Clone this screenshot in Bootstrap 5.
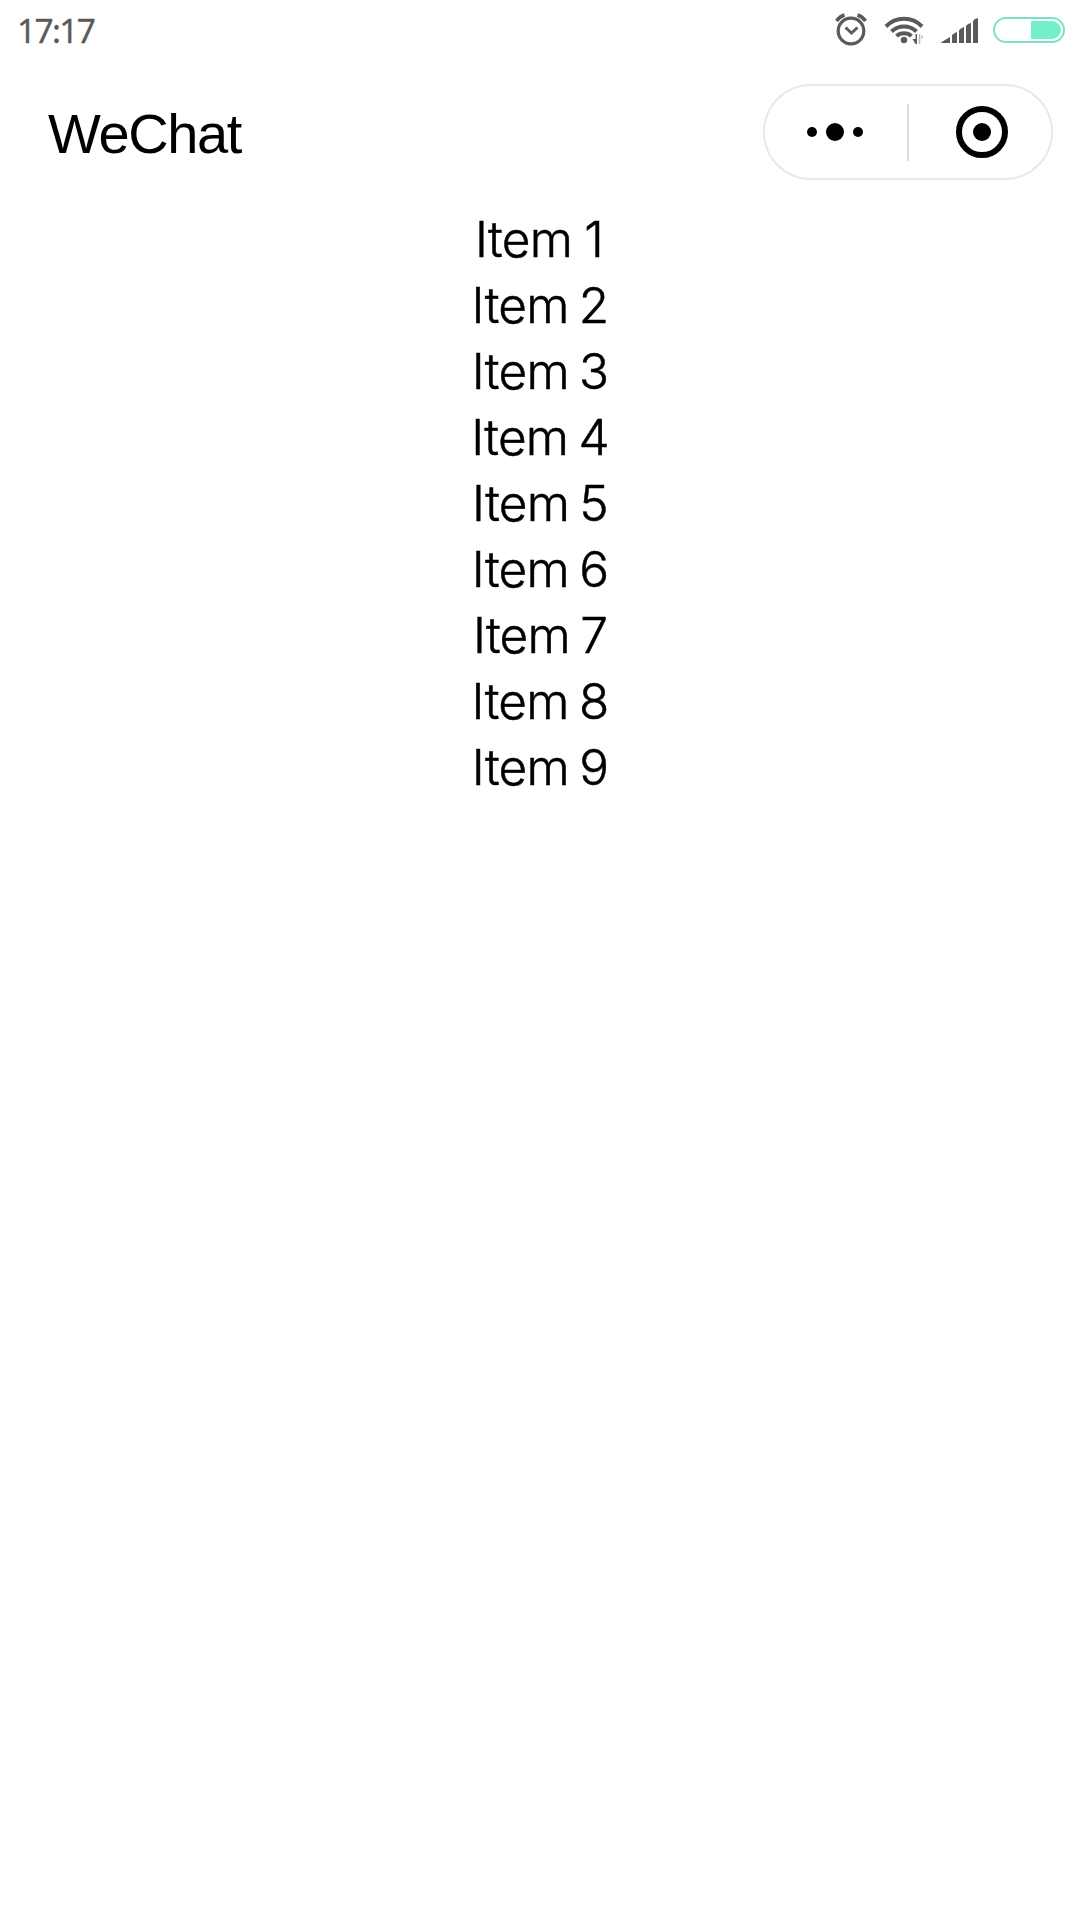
<!DOCTYPE html>
<html lang="en">
<head>
<meta charset="utf-8">
<meta name="viewport" content="width=device-width, initial-scale=1">
<title>WeChat</title>
<link rel="stylesheet" href="https://cdn.jsdelivr.net/npm/bootstrap@5.3.0/dist/css/bootstrap.min.css">
<style>
  body { background: #fff; color: #000; font-family: Inter, "Liberation Sans", sans-serif; }
  .status-bar { height: 60px; padding: 0 14px 0 17px; color: #5a5a5a; }
  .clock { font: 400 33.5px/60px "Noto Sans", sans-serif; letter-spacing: -1.7px; -webkit-text-stroke: .3px; }
  .title-bar { height: 144px; padding: 0 27px 0 48px; }
  .app-title { font: 400 56px/60px "Liberation Sans", sans-serif; letter-spacing: -1.4px; margin-top: 3px; }
  .capsule { width: 290px; height: 96px; border: 2px solid #e8e8e8; }
  .capsule-button { flex: 0 0 142px; height: 100%; border: 0; background: none; padding: 0; }
  .capsule-button svg { display: block; margin: 0 auto; }
  .capsule-more { padding-right: 2px; }
  .capsule-close { padding-left: 4px; }
  .capsule-divider { width: 2px; height: 57px; background: #dcdcdc; }
  .item-list { padding-top: 2px; font-size: 49.5px; line-height: 66px; font-weight: 300; letter-spacing: -.75px; word-spacing: -3px; -webkit-text-stroke: .5px #000; }
  .item-list > :first-child { word-spacing: -1px; padding-right: 2px; }
</style>
</head>
<body>
<header>
  <div class="status-bar d-flex justify-content-between align-items-center">
    <span class="clock">17:17</span>
    <svg width="236" height="60" viewBox="830 0 236 60" fill="none" stroke="#5a5a5a" aria-hidden="true">
      <g stroke-width="3.2">
        <circle cx="851" cy="31" r="12.8"/>
        <path d="M845.500 27.500l6 5.500 6-5.500" stroke-width="3"/>
        <path d="M836.500 21q3-4.500 8-6M865.500 21q-3-4.500-8-6" stroke-width="3.600"/>
      </g>
      <g stroke-width="4">
        <path d="M886 26.500a25 25 0 0 1 36 0M891.500 31.500a18 18 0 0 1 25 0M896.500 36a11.500 11.500 0 0 1 15 0"/>
      </g>
      <circle cx="904" cy="40" r="3.200" fill="#5a5a5a" stroke="none"/>
      <path d="M912.500 39h3v-5h1.500v10h-1.500z" fill="#5a5a5a" stroke="none"/>
      <path d="M919.500 34v10M922 35.500v3" stroke="#bbb" stroke-width="1.500"/>
      <path d="M941 43q0-1 1.500-1.500L950 37v6zM952 43v-7.500q0-1.500 5-3.500V43zM959 43V31q0-2 5-4v16zM966 43V26.500q0-2 5-3.500v20zM973 43V22q0-3 5-4v25z" fill="#5a5a5a" stroke="none"/>
      <rect x="994" y="18" width="70" height="24" rx="12" stroke="#7ce3c8" stroke-width="2"/>
      <path d="M1031 21h21a9 9 0 0 1 0 18h-21z" fill="#74efcb" stroke="none"/>
    </svg>
  </div>
  <div class="title-bar d-flex justify-content-between align-items-center">
    <h1 class="app-title mb-0">WeChat</h1>
    <div class="capsule rounded-pill d-flex align-items-center">
      <button class="capsule-button capsule-more" aria-label="More">
        <svg width="56" height="20" viewBox="0 0 56 20"><circle cx="5" cy="10" r="5"/><circle cx="28" cy="10" r="9"/><circle cx="51" cy="10" r="5"/></svg>
      </button>
      <span class="capsule-divider"></span>
      <button class="capsule-button capsule-close" aria-label="Close">
        <svg width="52" height="52" viewBox="0 0 52 52"><circle cx="26" cy="26" r="23" fill="none" stroke="#000" stroke-width="6"/><circle cx="26" cy="26" r="9"/></svg>
      </button>
    </div>
  </div>
</header>
<main class="item-list text-center">
  <div>Item 1</div>
  <div>Item 2</div>
  <div>Item 3</div>
  <div>Item 4</div>
  <div>Item 5</div>
  <div>Item 6</div>
  <div>Item 7</div>
  <div>Item 8</div>
  <div>Item 9</div>
</main>
<script src="https://cdn.jsdelivr.net/npm/bootstrap@5.3.0/dist/js/bootstrap.bundle.min.js"></script>
</body>
</html>
